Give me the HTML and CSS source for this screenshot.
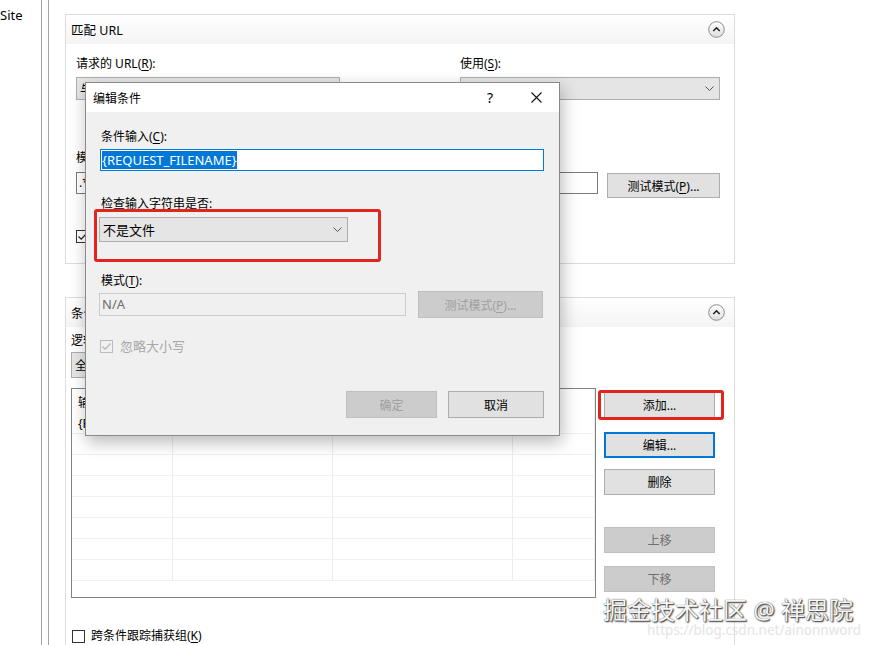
FILE: index.html
```html
<!DOCTYPE html>
<html lang="zh-CN">
<head>
  <meta charset="UTF-8">
  <meta name="viewport" content="width=device-width, initial-scale=1.0">
  <title>编辑条件</title>
  <link rel="stylesheet" href="styles.css">
</head>
<body>
  <div class="app">
    <aside class="tree">
      <div class="tree-item">Site</div>
    </aside>
    <div class="splitter"></div>
    <main class="main">
      <section class="group group-match">
        <header class="group-head">
          <span class="group-title">匹配 URL</span>
          <svg class="collapse" width="17" height="17" viewBox="0 0 17 17">
            <defs>
              <linearGradient id="cg" x1="0" y1="0" x2="0" y2="1">
                <stop offset="0" stop-color="#ffffff"/>
                <stop offset="1" stop-color="#dedede"/>
              </linearGradient>
            </defs>
            <circle cx="8.5" cy="8.5" r="7.8" fill="url(#cg)" stroke="#8c8c8c"/>
            <path d="M5.3 10 L8.5 6.8 L11.7 10" fill="none" stroke="#222" stroke-width="1.6"/>
          </svg>
        </header>
        <div class="group-body">
          <div class="two-col">
            <div class="col col-left">
              <div class="label">请求的 URL(<u>R</u>):</div>
              <div class="combo">与模式匹配
                <svg width="9" height="5" viewBox="0 0 9 5"><polyline points="0.5,0.5 4.5,4.5 8.5,0.5" fill="none" stroke="#555"/></svg>
              </div>
            </div>
            <div class="col col-right">
              <div class="label">使用(<u>S</u>):</div>
              <div class="combo">正则表达式
                <svg width="9" height="5" viewBox="0 0 9 5"><polyline points="0.5,0.5 4.5,4.5 8.5,0.5" fill="none" stroke="#555"/></svg>
              </div>
            </div>
          </div>
          <div class="label pattern-label">模式(<u>T</u>):</div>
          <div class="pattern-row">
            <div class="textbox">.*</div>
            <button class="btn btn-test">测试模式(<u>P</u>)...</button>
          </div>
          <div class="check check-case">
            <span class="box">
              <svg width="11" height="11" viewBox="0 0 11 11"><polyline points="1.5,5.5 4.2,8.2 9.5,2.5" fill="none" stroke="#222" stroke-width="1.2"/></svg>
            </span>
            忽略大小写(<u>I</u>)
          </div>
        </div>
      </section>

      <section class="group group-cond">
        <header class="group-head">
          <span class="group-title">条件</span>
          <svg class="collapse" width="17" height="17" viewBox="0 0 17 17">
            <circle cx="8.5" cy="8.5" r="7.8" fill="url(#cg)" stroke="#8c8c8c"/>
            <path d="M5.3 10 L8.5 6.8 L11.7 10" fill="none" stroke="#222" stroke-width="1.6"/>
          </svg>
        </header>
        <div class="group-body cond-body">
          <div class="label">逻辑分组(<u>G</u>):</div>
          <div class="combo combo-logic">全部匹配
            <svg width="9" height="5" viewBox="0 0 9 5"><polyline points="0.5,0.5 4.5,4.5 8.5,0.5" fill="none" stroke="#555"/></svg>
          </div>
          <div class="cond-row">
            <div class="list">
              <div class="cell head">输入</div>
              <div class="cell head">类型</div>
              <div class="cell head">模式</div>
              <div class="cell head"></div>
              <div class="cell">{REQUEST_F...</div>
              <div class="cell">不是文件</div>
              <div class="cell"></div>
              <div class="cell"></div>
              <div class="cell"></div><div class="cell"></div><div class="cell"></div><div class="cell"></div>
              <div class="cell"></div><div class="cell"></div><div class="cell"></div><div class="cell"></div>
              <div class="cell"></div><div class="cell"></div><div class="cell"></div><div class="cell"></div>
              <div class="cell"></div><div class="cell"></div><div class="cell"></div><div class="cell"></div>
              <div class="cell"></div><div class="cell"></div><div class="cell"></div><div class="cell"></div>
              <div class="cell"></div><div class="cell"></div><div class="cell"></div><div class="cell"></div>
              <div class="cell"></div><div class="cell"></div><div class="cell"></div><div class="cell"></div>
            </div>
            <div class="side-buttons">
              <button class="btn btn-add">添加...</button>
              <button class="btn btn-edit">编辑...</button>
              <button class="btn btn-del">删除</button>
              <button class="btn btn-disabled btn-up">上移</button>
              <button class="btn btn-disabled btn-down">下移</button>
            </div>
          </div>
          <div class="check check-track">
            <span class="box"></span>
            跨条件跟踪捕获组(<u>K</u>)
          </div>
        </div>
      </section>
    </main>
  </div>

  <div class="dialog">
    <div class="dlg-title">
      <span>编辑条件</span>
      <span class="dlg-help">?</span>
      <span class="dlg-close">
        <svg width="11" height="11" viewBox="0 0 11 11"><path d="M0.5 0.5 L10.5 10.5 M10.5 0.5 L0.5 10.5" stroke="#111" stroke-width="1.1"/></svg>
      </span>
    </div>
    <div class="dlg-body">
      <div class="label">条件输入(<u>C</u>):</div>
      <div class="dlg-input"><span class="selected">{REQUEST_FILENAME}</span></div>
      <div class="label dlg-check-label">检查输入字符串是否:</div>
      <div class="combo dlg-combo">不是文件
        <svg width="9" height="5" viewBox="0 0 9 5"><polyline points="0.5,0.5 4.5,4.5 8.5,0.5" fill="none" stroke="#555"/></svg>
      </div>
      <div class="label dlg-pattern-label">模式(<u>T</u>):</div>
      <div class="dlg-pattern-row">
        <div class="textbox-disabled">N/A</div>
        <button class="btn btn-disabled dlg-test">测试模式(<u>P</u>)...</button>
      </div>
      <div class="check check-disabled">
        <span class="box">
          <svg width="11" height="11" viewBox="0 0 11 11"><polyline points="1.5,5.5 4.2,8.2 9.5,2.5" fill="none" stroke="#b5b5b5" stroke-width="1.2"/></svg>
        </span>
        忽略大小写
      </div>
      <div class="dlg-footer">
        <button class="btn btn-disabled btn-ok">确定</button>
        <button class="btn btn-cancel">取消</button>
      </div>
    </div>
  </div>

  <div class="mark mark-combo"></div>
  <div class="mark mark-add"></div>

  <div class="watermark">掘金技术社区 @ 禅思院</div>
  <div class="watermark-url">https://blog.csdn.net/ainonnword</div>
</body>
</html>
```

FILE: styles.css
```css
html, body { height: 100%; }

body {
  margin: 0;
  background-color: #fff;
  font-family: "Noto Sans", "Noto Sans CJK SC", sans-serif;
  font-size: 12px;
  color: #000;
  overflow: hidden;
}

u { text-decoration: underline; text-underline-offset: 2px; }

.app {
  display: flex;
  height: 100%;
}

.tree {
  width: 41px;
  border-right: 1px solid #a5a5a5;
  font-size: 13px;
  padding-top: 6px;
}

.tree-item {
  line-height: 18px;
}

.splitter {
  width: 6px;
  border-right: 1px solid #a5a5a5;
}

.main {
  padding: 14px 0 0 16px;
}

.group {
  width: 670px;
  box-sizing: border-box;
  border: 1px solid #dcdcdc;
}

.group-match { height: 250px; }

.group-cond { margin-top: 33px; }

.group-head {
  height: 29px;
  display: flex;
  align-items: center;
  justify-content: space-between;
  padding: 0 9px 0 5px;
  background: linear-gradient(#ffffff, #f4f4f4);
}

.group-title {
  padding-top: 3px;
  line-height: 16px;
  font-size: 12.5px;
}

.group-body {
  padding: 12px 0 0 10px;
}

.label {
  line-height: 16px;
  white-space: nowrap;
}

.two-col {
  display: flex;
}

.col-left { width: 264px; }

.col-right {
  width: 260px;
  margin-left: 120px;
}

.combo {
  margin-top: 5px;
  height: 23px;
  box-sizing: border-box;
  border: 1px solid #adadad;
  background-color: #e5e5e5;
  display: flex;
  align-items: center;
  justify-content: space-between;
  padding: 0 5px 0 3px;
  white-space: nowrap;
}

.pattern-label { margin-top: 50px; }

.pattern-row {
  display: flex;
  align-items: flex-start;
  margin-top: 6px;
}

.textbox {
  width: 522px;
  height: 22px;
  box-sizing: border-box;
  border: 1px solid #7a7a7a;
  background-color: #fff;
  line-height: 20px;
  padding-left: 2px;
}

.btn {
  font-family: inherit;
  font-size: 12px;
  color: #000;
  background-color: #e1e1e1;
  border: 1px solid #adadad;
  border-radius: 0;
  padding: 0;
  box-sizing: border-box;
  display: block;
}

.btn-test {
  width: 113px;
  height: 25px;
  margin: 1px 0 0 9px;
}

.check {
  display: flex;
  align-items: center;
  line-height: 16px;
  white-space: nowrap;
}

.box {
  width: 13px;
  height: 13px;
  box-sizing: border-box;
  border: 1px solid #333;
  background-color: #fff;
  display: flex;
  align-items: center;
  justify-content: center;
  margin-right: 7px;
}

.check-case { margin-top: 30px; }

.cond-body {
  padding: 6px 0 20px 5px;
}

.combo-logic {
  width: 260px;
  height: 26px;
  margin-top: 3px;
}

.cond-row {
  display: flex;
  margin-top: 10px;
}

.list {
  width: 525px;
  height: 210px;
  box-sizing: border-box;
  border: 1px solid #828282;
  background-color: #fff;
  display: grid;
  grid-template-columns: 101px 160px 180px 1fr;
  grid-auto-rows: 21px;
  grid-template-rows: 24px;
  overflow: hidden;
}

.cell {
  border-right: 1px solid #ececec;
  border-bottom: 1px solid #f0f0f0;
  padding: 3px 0 0 6px;
  line-height: 16px;
  white-space: nowrap;
}

.cell.head {
  padding-top: 6px;
  border-bottom-color: #fff;
}

.side-buttons {
  margin-left: 8px;
  width: 111px;
}

.side-buttons .btn {
  width: 111px;
  height: 26px;
}

.btn-add { margin-top: 4px; }

.btn-edit {
  margin-top: 14px;
  border: 2px solid #0078d7;
}

.btn-del { margin-top: 11px; }

.btn-up { margin-top: 32px; }

.btn-down { margin-top: 13px; }

.btn-disabled {
  background-color: #cccccc;
  border-color: #bfbfbf;
  color: #6f6f6f;
}

.check-track {
  margin-top: 30px;
  padding-left: 1px;
}

.check-track .box { margin-right: 6px; }

/* dialog window over the page */
.dialog {
  position: absolute;
  left: 85px;
  top: 82px;
  width: 475px;
  height: 354px;
  box-sizing: border-box;
  border: 1px solid #8a8a8a;
  background-color: #f0f0f0;
  box-shadow: 2px 6px 16px rgba(0, 0, 0, 0.28);
}

.dlg-title {
  height: 29px;
  background-color: #fff;
  display: flex;
  align-items: center;
  padding-left: 7px;
}

.dlg-help {
  margin-left: auto;
  width: 46px;
  text-align: center;
  font-size: 14px;
  padding-left: 2px;
}

.dlg-close {
  width: 46px;
  display: flex;
  justify-content: center;
}

.dlg-body {
  padding: 17px 15px 0 14px;
}

.dlg-body .label { padding-left: 1px; }

.dlg-input {
  margin-top: 4px;
  height: 22px;
  box-sizing: border-box;
  border: 1px solid #0078d7;
  background-color: #fff;
  padding: 1px 0 0 1px;
  font-size: 13px;
}

.selected {
  background-color: #0078d7;
  color: #fff;
  line-height: 18px;
  display: inline-block;
}

.dlg-check-label { margin-top: 25px; }

.dlg-combo {
  width: 249px;
  height: 25px;
  margin-left: -1px;
  font-size: 13px;
}

.dlg-pattern-label { margin-top: 31px; }

.dlg-pattern-row {
  display: flex;
  align-items: flex-start;
  margin-top: 2px;
}

.textbox-disabled {
  width: 307px;
  height: 23px;
  margin: 2px 0 0 -1px;
  box-sizing: border-box;
  border: 1px solid #cccccc;
  background-color: #f0f0f0;
  color: #6d6d6d;
  line-height: 21px;
  padding-left: 2px;
  font-size: 13px;
}

.dlg-test {
  width: 125px;
  height: 27px;
  margin-left: 12px;
  color: #a0a0a0;
}

.check-disabled {
  margin-top: 20px;
  color: #a8a8a8;
  font-size: 13px;
}

.check-disabled .box {
  border-color: #bcbcbc;
  background-color: #f0f0f0;
}

.dlg-footer {
  display: flex;
  justify-content: flex-end;
  margin-top: 37px;
}

.dlg-footer .btn { height: 27px; }

.btn-ok {
  width: 91px;
  color: #a0a0a0;
}

.btn-cancel {
  width: 96px;
  margin-left: 11px;
}

/* red annotation boxes */
.mark {
  position: absolute;
  border: 3px solid #e2241f;
  border-radius: 3px;
}

.mark-combo {
  left: 94px;
  top: 209px;
  width: 281px;
  height: 47px;
}

.mark-add {
  left: 598px;
  top: 390px;
  width: 120px;
  height: 24px;
}

.watermark {
  position: absolute;
  left: 603px;
  top: 595px;
  font-size: 24px;
  line-height: 30px;
  color: #f6f6f6;
  text-shadow: 0 0 1px #3c3c3c, 1px 1px 1px #555, 1px 1px 2px #888;
  white-space: nowrap;
}

.watermark-url {
  position: absolute;
  left: 647px;
  top: 621px;
  font-size: 13.5px;
  line-height: 18px;
  color: #e4e4e4;
  white-space: nowrap;
}
```
